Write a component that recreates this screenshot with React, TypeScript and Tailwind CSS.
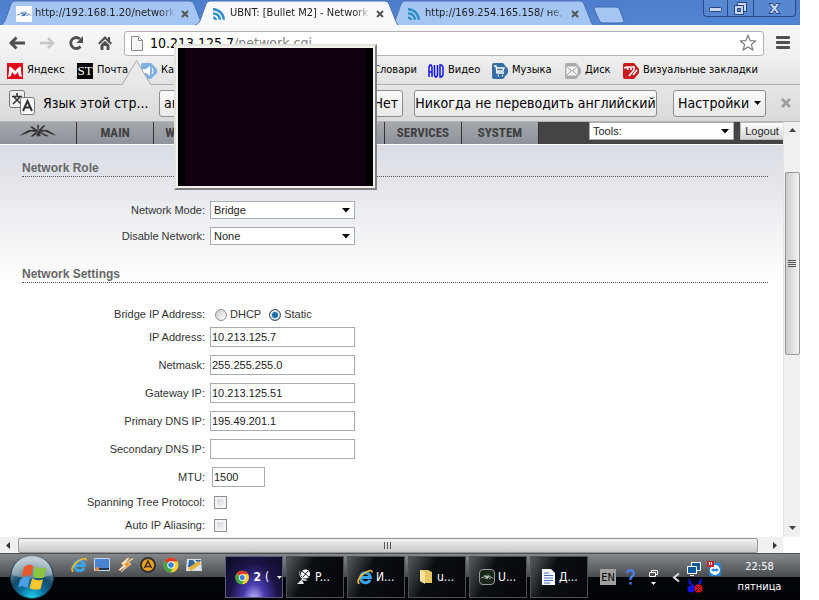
import { type ReactNode } from 'react';

type TabProps = {
  title: string;
  active?: boolean;
  icon: ReactNode;
};

type TaskProps = {
  label: string;
  icon: ReactNode;
};

const fields = [
  { id: 'ip', label: 'IP Address:', value: '10.213.125.7' },
  { id: 'netmask', label: 'Netmask:', value: '255.255.255.0' },
  { id: 'gateway', label: 'Gateway IP:', value: '10.213.125.51' },
  { id: 'dns1', label: 'Primary DNS IP:', value: '195.49.201.1' },
  { id: 'dns2', label: 'Secondary DNS IP:', value: '' },
];

const menu = ['MAIN', 'WIRELESS', 'NETWORK', 'ADVANCED', 'SERVICES', 'SYSTEM'];

function RssIcon() {
  return (
    <svg width="14" height="14" viewBox="0 0 14 14" fill="none" stroke="#2b8fc4" strokeWidth="2.4" aria-hidden="true">
      <path d="M1 2.2c6 .2 10.600 4.600 10.800 10.600" />
      <path d="M1 6.400c4 .2 6.600 2.800 6.800 6.400" />
      <path d="M1 10.600c1.600.1 2.700 1 2.800 2.400" />
    </svg>
  );
}

function UbntMark({ color }: { color: string }) {
  return (
    <svg className="h-full w-full" viewBox="0 0 40 14" fill={color} aria-hidden="true">
      <path d="M0 11.500 4 9l6-3.500 9-.5 1 2.500-8-.5-5 2.500zM40 11.500 36 9l-6-3.500-9-.5-1 2.500 8-.5 5 2.500z" />
      <path d="m11 2 3-.5 5 4-1.500 1zM28 .5l-2.500 0-4.500 5 1.500 1zM19 0h2l-.5 6h-1zM18.500 7h3l1.500 5h-4.500zM18 7l-6 5.500h3L20 8zM22 7l10 5h-4l-7-4z" />
    </svg>
  );
}

function ChromeIcon({ size }: { size: number }) {
  return (
    <svg width={size} height={size} viewBox="0 0 16 16" aria-hidden="true">
      <circle cx="8" cy="8" r="7.500" fill="#f6cf2f" />
      <path d="M8 8 1.500 4.250A7.500 7.500 0 0 1 14.500 4.250L8 4.500z" fill="#dc3a2b" />
      <path d="M1.500 4.250A7.500 7.500 0 0 0 7.500 15.500L10 11 8 8z" fill="#3fa648" />
      <circle cx="8" cy="8" r="3.700" fill="#fff" />
      <circle cx="8" cy="8" r="2.800" fill="#3d7ddb" />
    </svg>
  );
}

function IeIcon({ size }: { size: number }) {
  return (
    <svg width={size} height={size} viewBox="0 0 16 16" fill="none" aria-hidden="true">
      <path d="M13 11A5 5 0 1 1 13.500 8.500H4" stroke="#39a5ee" strokeWidth="3" />
      <path d="M2.500 14.500C-.5 14 1.500 8.500 6 5S15.500.3 15 3.500" stroke="#f3b92c" strokeWidth="1.700" />
    </svg>
  );
}

function Tab({ title, active, icon }: TabProps) {
  return (
    <div className={active ? 'relative z-10 -ml-2 h-[25px] w-[203px]' : 'relative -ml-2 h-[25px] w-[203px] first:ml-0'}>
      <svg className="absolute inset-0 h-full w-full" viewBox="0 0 203 25" preserveAspectRatio="none" aria-hidden="true">
        <path
          d="M0 25C4 24 5 21 6 18L11 4Q12 1 15 1H190Q193 1 194 4L200 19C201 22 202 24 203 25"
          fill={active ? '#f8f9fb' : '#a5c6f3'}
          stroke="#4a6fae"
        />
      </svg>
      <div className="relative flex h-full items-center pl-4 pt-0.5">
        <span className="flex w-4 justify-center">{icon}</span>
        <span className="ml-[3px] w-[141px] whitespace-nowrap text-[11px] text-[#222] [mask-image:linear-gradient(to_right,black_88%,transparent)]">
          {title}
        </span>
        <button aria-label="Закрыть вкладку" className="ml-[5px]">
          <svg width="8" height="8" viewBox="0 0 8 8" stroke="#555" strokeWidth="2">
            <path d="m1 1 6 6M7 1 1 7" />
          </svg>
        </button>
      </div>
    </div>
  );
}

function TitleBar() {
  return (
    <div className="flex h-[25px] items-start justify-between overflow-hidden bg-gradient-to-b from-[#4d7dcd] to-[#5285d4]">
      <div className="flex">
        <Tab
          title="http://192.168.1.20/network"
          icon={<span className="flex h-4 w-4 items-center bg-white"><UbntMark color="#3a6db5" /></span>}
        />
        <Tab title="UBNT: [Bullet M2] - Network" active icon={<RssIcon />} />
        <Tab title="http://169.254.165.158/ не," icon={<RssIcon />} />
        <button aria-label="Новая вкладка" className="pt-1">
          <svg width="32" height="18" viewBox="0 0 32 18">
            <path d="M3 1h21q2 0 3 3l4 11q0 2-2 2H9q-2 0-3-3L1 3q0-2 2-2z" fill="#a5c6f3" stroke="#3d66ab" />
          </svg>
        </button>
      </div>
      <div className="mr-1 flex h-[17px] divide-x divide-[#294b8a] rounded-b border border-t-0 border-[#294b8a] bg-[#5887d2]">
        <button aria-label="Свернуть" className="flex w-6 items-center justify-center pt-1">
          <svg width="13" height="6" viewBox="0 0 13 6"><rect x=".5" y=".5" width="12" height="4" rx="1" fill="#c8d6ee" stroke="#26447d" /></svg>
        </button>
        <button aria-label="Восстановить" className="flex w-[26px] items-center justify-center">
          <svg width="13" height="13" viewBox="0 0 13 13" fill="#c8d6ee" stroke="#26447d">
            <path d="M3.500.5h9v9h-9z" />
            <path d="M.5 3.500h9v9h-9z" />
            <path d="M3.500 6.500h3v3h-3z" fill="#5887d2" />
          </svg>
        </button>
        <button aria-label="Закрыть" className="flex w-[41px] items-center justify-center">
          <svg width="13" height="11" viewBox="0 0 13 11">
            <path d="M1 .5h3.500l2 2.500 2-2.500H12L8.500 5.500l3.500 5H8.500l-2-3-2 3H1l3.500-5z" fill="#c8d6ee" stroke="#26447d" />
          </svg>
        </button>
      </div>
    </div>
  );
}

function Toolbar() {
  return (
    <div className="flex h-8 items-center bg-gradient-to-b from-[#f8f9fb] to-[#efefef] pl-2 pr-2.5 pt-1">
      <button aria-label="Назад" className="mr-3.5">
        <svg width="18" height="14" viewBox="0 0 18 14" fill="none" stroke="#505050" strokeWidth="3"><path d="M17 7H3M8.500 1.500 3 7l5.500 5.500" /></svg>
      </button>
      <button aria-label="Вперёд" className="mr-3">
        <svg width="16" height="14" viewBox="0 0 16 14" fill="none" stroke="#c6c6c6" strokeWidth="2.500"><path d="M0 7h13M8 2l5 5-5 5" /></svg>
      </button>
      <button aria-label="Обновить" className="mr-3.5">
        <svg width="16" height="16" viewBox="0 0 16 16" fill="none">
          <path d="M12.500 11.500A5.500 5.500 0 1 1 12 4" stroke="#505050" strokeWidth="2.800" />
          <path d="M15 1v7H8.500z" fill="#505050" />
        </svg>
      </button>
      <button aria-label="Домой" className="mr-3">
        <svg width="14" height="16" viewBox="0 0 14 16" fill="#505050"><path d="M7 1 0 8l1.500 1.500L7 4.200l5.500 5.300L14 8l-2-2V2h-2v2zM2.500 10 7 5.800l4.500 4.200v5H8.500v-4h-3v4h-3z" /></svg>
      </button>
      <div className="flex h-[25px] flex-1 items-center rounded-[3px] border border-[#b2b2b2] bg-white pl-1.5 pr-1">
        <svg width="12" height="15" viewBox="0 0 12 15" fill="#f5f5f5" stroke="#8b8b8b"><path d="M.5.500h7l4 4v10H.5zM7.500.500v4h4" /></svg>
        <div className="ml-[7px] flex-1 whitespace-nowrap text-[14px] text-black">
          10.213.125.7<span className="text-[#808080]">/network.cgi</span>
        </div>
        <button aria-label="Добавить в закладки" className="mr-0.5">
          <svg width="18" height="18" viewBox="0 0 20 20" fill="#fff" stroke="#777" strokeWidth="1.300"><path d="m10 1.500 2.400 5.800 6.100.4-4.700 4 1.500 6.100L10 14.400l-5.300 3.400 1.500-6.100-4.700-4 6.100-.4z" /></svg>
        </button>
      </div>
      <button aria-label="Меню" className="ml-3">
        <svg width="14" height="14" viewBox="0 0 14 14" fill="#505050"><rect y="0" width="14" height="3" rx="1" /><rect y="5" width="14" height="3" rx="1" /><rect y="10" width="14" height="3" rx="1" /></svg>
      </button>
    </div>
  );
}

function Bookmark({ label, icon }: TaskProps) {
  return (
    <a href="#" className="flex items-center gap-1 whitespace-nowrap text-black">
      {icon}
      {label}
    </a>
  );
}

function Bookmarks() {
  return (
    <div className="relative flex h-[28px] items-center border-b border-[#b0b0b0] bg-gradient-to-b from-[#efefef] to-[#e2e2e2] pl-[7px] text-[11px]">
      <div className="w-[70px]">
        <Bookmark
          label="Яндекс"
          icon={<svg width="16" height="16" viewBox="0 0 16 16"><path d="M0 0h16v16H0z" fill="#e3061a" /><path d="M1 14c1-3 1-7 1-10h2l4 4 4-4h2c0 3 0 7 1 10l-3-1-1-4-3 3-3-3-1 4z" fill="#fff" /></svg>}
        />
      </div>
      <div className="w-16">
        <Bookmark
          label="Почта"
          icon={<span className="flex h-4 w-4 items-center justify-center overflow-hidden bg-black font-['Liberation_Serif',serif] text-[13px] leading-none text-white">ST</span>}
        />
      </div>
      <div className="w-[213px]">
        <Bookmark
          label="Карты"
          icon={
            <svg width="16" height="16" viewBox="0 0 16 16"><path d="M2 0h8l6 6v4l-6 6H2q-2 0-2-2V2q0-2 2-2z" fill="#7fb0df" /><path d="M2 6h3l4-3v10l-4-3H2z" fill="#fff" /><path d="M11 5q2 3 0 6" fill="none" stroke="#fff" /></svg>
          }
        />
      </div>
      <div className="w-[74px] pl-[19px]">
        <Bookmark label="Словари" icon={null} />
      </div>
      <div className="w-16">
        <Bookmark
          label="Видео"
          icon={
            <svg width="16" height="14" viewBox="0 0 16 14" fill="none" stroke="#1212f0" strokeWidth="1.500"><path d="M1 13V3l1-2h1l1 2v10M1 8h3M6.500 1v10l1 2h1l1-2V1M12 1v12h1.500l1.500-2V3l-1.500-2z" /></svg>
          }
        />
      </div>
      <div className="w-[73px]">
        <Bookmark
          label="Музыка"
          icon={
            <svg width="16" height="16" viewBox="0 0 16 16"><path d="M2 0h9l5 6v4l-5 6H2q-2 0-2-2V2q0-2 2-2z" fill="#356fa6" /><path d="M2 3h2l1 7h7M4.500 5H12l-1 3H5M6 12.500h1M10 12.500h1" fill="none" stroke="#fff" strokeWidth="1.300" /></svg>
          }
        />
      </div>
      <div className="w-[58px]">
        <Bookmark
          label="Диск"
          icon={
            <svg width="16" height="16" viewBox="0 0 16 16"><path d="M2 0h9l5 6v4l-5 6H2q-2 0-2-2V2q0-2 2-2z" fill="#a9a9a9" /><path d="M2 4h10v8H2z" fill="#eee" stroke="#fff" /><path d="m2 4 5 4 5-4M2 12l4-4M12 12 8 8" fill="none" stroke="#a0a0a0" /></svg>
          }
        />
      </div>
      <Bookmark
        label="Визуальные закладки"
        icon={
          <svg width="16" height="16" viewBox="0 0 16 16"><path d="M2 0h9l5 6v4l-5 6H2q-2 0-2-2V2q0-2 2-2z" fill="#c9191d" /><path d="M1 5l3-1 1 3M5 4h3v3M9 4h2v3l-5 6M10 12l4-5" fill="none" stroke="#fff" strokeWidth="1.600" /></svg>
        }
      />
      {/* Pointer of the translate bar */}
      <svg className="absolute left-[122px] top-[3px]" width="30" height="25" viewBox="0 0 30 25" aria-hidden="true">
        <path d="M0 25 14.500.500 29 25" fill="#e9e9e9" stroke="#aaa" />
      </svg>
    </div>
  );
}

function TranslateBar() {
  const button = 'flex h-[27px] items-center whitespace-nowrap rounded-[3px] border border-[#8c8c8c] bg-gradient-to-b from-[#fbfbfb] to-[#e9e9e9] px-1';
  return (
    <div className="flex h-[37px] items-center border-b border-[#b5b5b5] bg-gradient-to-b from-[#e6e6e6] to-[#dadada] pl-[9px] pr-2 text-[14px] text-black">
      <svg width="26" height="26" viewBox="0 0 26 26" aria-hidden="true">
        <rect x=".5" y=".5" width="15" height="17" rx="2" fill="#eee" stroke="#777" />
        <path d="M8 3v3M3 6.500h10M5 7l7 7M11 7l-7 7" fill="none" stroke="#333" strokeWidth="1.500" />
        <rect x="11.500" y="7.500" width="14" height="17" rx="2" fill="#fafafa" stroke="#777" />
        <path d="m14 21 4.500-10L23 21M15.500 17.500h6" fill="none" stroke="#333" strokeWidth="2" />
      </svg>
      <span className="ml-2 w-[116px] whitespace-nowrap">Язык этой стр...</span>
      <button className={`${button} w-[120px]`}>английский</button>
      <button className={`${button} ml-2 w-[70px]`}>Да</button>
      <button className={`${button} ml-2 w-[38px] justify-end`}>Нет</button>
      <button className={`${button} ml-[11px] w-[243px] justify-center`}>Никогда не переводить английский</button>
      <button className={`${button} ml-4 w-[93px] justify-between`}>
        Настройки
        <svg width="7" height="4" viewBox="0 0 7 4"><path d="M0 0h7L3.500 4z" /></svg>
      </button>
      <button aria-label="Закрыть панель" className="ml-auto">
        <svg width="12" height="12" viewBox="0 0 12 12" stroke="#9c9c9c" strokeWidth="2.500"><path d="m2 2 8 8M10 2l-8 8" /></svg>
      </button>
    </div>
  );
}

function SelectBox({ id, value }: { id: string; value: string }) {
  return (
    <div className="relative h-[18px] w-[145px]">
      <select id={id} aria-label={value} className="block h-full w-full appearance-none border border-[#a5acb2] bg-white pl-[3px] text-[11px] leading-none text-[#222]">
        <option>{value}</option>
      </select>
      <svg className="pointer-events-none absolute right-[5px] top-[7px]" width="8" height="5" viewBox="0 0 8 5" aria-hidden="true"><path d="M0 0h8L4 4.500z" /></svg>
    </div>
  );
}

function MainMenu() {
  return (
    <nav className="flex h-[23px] justify-between overflow-hidden border-b border-white bg-[#444]">
      <div className="flex">
        <a href="#" aria-label="Ubiquiti" className="flex w-[77px] items-center justify-center border-r border-[#333] bg-gradient-to-b from-[#a6a8ac] to-[#8d929b]">
          <span className="-mt-1 h-[13px] w-[38px]"><UbntMark color="#333" /></span>
        </a>
        {menu.map((item) => (
          <a key={item} href="#" className="flex w-[77px] items-center justify-center border-r border-[#333] bg-gradient-to-b from-[#a6a8ac] to-[#8d929b] font-['Liberation_Sans_Narrow','Roboto_Condensed','DejaVu_Sans_Condensed',sans-serif] text-[13px] font-bold text-[#3f3f3f]">
            {item}
          </a>
        ))}
      </div>
      <div className="flex">
        <SelectBox id="tools" value="Tools:" />
        <button className="ml-[6px] h-[18px] w-[43px] border border-r-0 border-[#bbb] bg-gradient-to-b from-white to-[#d6d6d6] text-[11px] leading-none text-[#222]">Logout</button>
      </div>
    </nav>
  );
}

function Row({ id, label, className, children }: { id: string; label: string; className: string; children: ReactNode }) {
  return (
    <div className={`flex items-center ${className}`}>
      <label htmlFor={id} className="mr-[5px] w-[205px] text-right">{label}</label>
      {children}
    </div>
  );
}

function Heading({ children }: { children: ReactNode }) {
  return (
    <h2 className="ml-[22px] mr-[15px] h-5 border-b border-dotted border-[#555] text-[12px] font-bold leading-[22px] text-[#666]">{children}</h2>
  );
}

const input = 'h-5 border border-[#a5acb2] bg-white pl-px text-[11px] text-[#222]';
const radio = 'mt-0.5 h-3 w-3 appearance-none rounded-full border border-[#8a8f94] bg-gradient-to-br from-[#ccc] to-white checked:border-[#555f66] checked:bg-none checked:bg-[#1b6ea8] checked:shadow-[inset_0_0_0_2px_#dfe6ea]';
const checkbox = 'ml-1 h-[13px] w-[13px] appearance-none border border-[#8e8f8f] bg-gradient-to-br from-[#c8ccd2] to-white shadow-[inset_0_0_0_2px_#f4f4f4]';

function NetworkForm() {
  return (
    <form className="flex-1 bg-[linear-gradient(to_bottom,#d9dce3_0,#ffffff_135px)] pt-3">
      <Heading>Network Role</Heading>
      <div className="mt-5">
        <Row id="mode" label="Network Mode:" className="h-[26px]"><SelectBox id="mode" value="Bridge" /></Row>
        <Row id="disable" label="Disable Network:" className="h-[26px]"><SelectBox id="disable" value="None" /></Row>
      </div>
      <div className="mt-[14px]"><Heading>Network Settings</Heading></div>
      <div className="mt-[22px]">
        <Row id="dhcp" label="Bridge IP Address:" className="h-[18px]">
          <input type="radio" id="dhcp" name="bridge" className={`${radio} ml-[5px]`} />
          <label htmlFor="dhcp" className="ml-[3px]">DHCP</label>
          <input type="radio" id="static" name="bridge" defaultChecked className={`${radio} ml-2`} />
          <label htmlFor="static" className="ml-[3px]">Static</label>
        </Row>
        {fields.map((field) => (
          <Row key={field.id} id={field.id} label={field.label} className="h-7">
            <input id={field.id} defaultValue={field.value} className={`${input} w-[145px]`} />
          </Row>
        ))}
        <Row id="mtu" label="MTU:" className="h-7"><input id="mtu" defaultValue="1500" className={`${input} ml-0.5 w-[53px]`} /></Row>
        <Row id="stp" label="Spanning Tree Protocol:" className="h-[23px]"><input type="checkbox" id="stp" className={checkbox} /></Row>
        <Row id="alias" label="Auto IP Aliasing:" className="h-[23px]"><input type="checkbox" id="alias" className={checkbox} /></Row>
      </div>
    </form>
  );
}

function VerticalScrollbar() {
  return (
    <div className="flex w-[17px] flex-col items-center border-l border-[#e4e4e4] bg-[#f0f0f0]">
      <svg className="mt-1.5" width="7" height="4" viewBox="0 0 7 4"><path d="M0 4h7L3.500 0z" fill="#444" /></svg>
      <div className="mt-10 flex h-[183px] w-[15px] items-center justify-center rounded-[2px] border border-[#979797] bg-gradient-to-r from-[#cbcbce] to-[#f5f5f5]">
        <svg width="8" height="8" viewBox="0 0 8 8" stroke="#555"><path d="M0 .5h8M0 2.500h8M0 4.500h8M0 6.500h8" /></svg>
      </div>
      <svg className="mb-[7px] mt-auto" width="7" height="4" viewBox="0 0 7 4"><path d="M0 0h7L3.500 4z" fill="#444" /></svg>
    </div>
  );
}

function HorizontalScrollbar() {
  return (
    <div className="mr-[17px] flex h-4 items-center bg-[#f0f0f0]">
      <svg className="ml-1.5" width="4" height="7" viewBox="0 0 4 7"><path d="M4 0v7L0 3.500z" fill="#333" /></svg>
      <div className="ml-2 mr-[15px] flex h-[15px] flex-1 items-center justify-center rounded-[2px] border border-[#979797] bg-gradient-to-b from-[#f2f2f2] to-[#c9c9cc]">
        <svg width="9" height="7" viewBox="0 0 9 7" stroke="#555"><path d="M.5 0v7M3.500 0v7M6.500 0v7" /></svg>
      </div>
      <svg className="mr-[6px]" width="4" height="7" viewBox="0 0 4 7"><path d="M0 0v7l4-3.500z" fill="#333" /></svg>
    </div>
  );
}

function Task({ label, icon }: TaskProps) {
  return (
    <button className="flex h-[42px] w-[58px] items-center border border-[#4c4f54] bg-[linear-gradient(115deg,#55585d_0,#0a0d12_38%,#05070b_100%)] pl-[9px] text-[12px] text-white">
      <span className="flex w-4 justify-center">{icon}</span>
      <span className="ml-[3px] whitespace-nowrap">{label}</span>
    </button>
  );
}

function Taskbar() {
  return (
    <footer className="flex h-[47px] items-center border-t border-[#4b4f52] bg-[linear-gradient(to_bottom,#85898c_0,#4a4d50_49%,#03070c_51%,#010204_100%)]">
      <button aria-label="Пуск" className="ml-[10px]">
        <svg width="44" height="44" viewBox="0 0 44 44">
          <defs>
            <radialGradient id="orb" cx=".5" cy="1" r=".9">
              <stop offset="0" stopColor="#1fdcf8" />
              <stop offset=".35" stopColor="#0c6e9e" />
              <stop offset=".6" stopColor="#134a6b" />
              <stop offset="1" stopColor="#9db0bc" />
            </radialGradient>
          </defs>
          <circle cx="22" cy="22" r="21.500" fill="url(#orb)" stroke="#233a4a" />
          <path d="M2 20A20 20 0 0 1 42 20Q22 27 2 20z" fill="#fff" opacity=".35" />
          <path d="M14 12q5-4 9.500-1L21 21q-5-2-9.500 1z" fill="#e8582a" />
          <path d="M25 11.500q5 3 11.500 1L34 22.500q-6 2-11-1z" fill="#8cc63e" />
          <path d="M10.500 24q5-3 9.500-1l-2.500 10q-5-3-9.500-.5z" fill="#4b9fe3" />
          <path d="M22 23.500q5 3 11 1L30.500 34q-6 2-11-1z" fill="#fbc52c" />
        </svg>
      </button>
      <div className="-mt-6 ml-[17px] flex items-center gap-[7px]">
        <IeIcon size={16} />
        <svg width="16" height="14" viewBox="0 0 16 14"><path d="M.5.500h15v12H.5z" fill="#4a83cf" stroke="#c7d6e8" /><path d="M1 10h14v2H1z" fill="#26384d" /><circle cx="3" cy="11" r="2" fill="#e98a31" /></svg>
        <svg width="16" height="16" viewBox="0 0 16 16"><path d="M11 0 3 7l3 1-5 5 2 1 8-6-3-1 5-6z" fill="#f1e5cf" stroke="#6b4a1e" strokeWidth=".6" /><path d="m14 2-8 6 3 1-5 6 10-8-3-1 5-4z" fill="#f7931f" stroke="#fff1d8" strokeWidth=".6" /></svg>
        <svg width="16" height="16" viewBox="0 0 16 16"><circle cx="8" cy="8" r="7" fill="#f2a51d" stroke="#333" strokeWidth="2" /><path d="m4.500 11 3.500-7 3.500 7M6 9.500h4" fill="none" stroke="#3d2a08" strokeWidth="1.600" /></svg>
        <ChromeIcon size={16} />
        <svg width="16" height="14" viewBox="0 0 16 14"><path d="M1 1h14l1 12H0z" fill="#d9e2ea" /><path d="M3 2h4l3 4-4 4-4-1zM9 2l4 4 2-4z" fill="#36679b" /><path d="m2 10 3-2 8-5 2 3-7 5-3 2z" fill="#e8b33d" /></svg>
      </div>
      <div className="ml-[23px] flex gap-[3px]">
        <button className="flex h-[42px] w-[58px] items-center border border-[#5d5a80] bg-[radial-gradient(ellipse_at_50%_110%,#c8c4ff_0,#4a3bb0_28%,#1a1446_60%,#0e0c22_100%)] pl-[9px] text-[12px] font-bold text-white">
          <ChromeIcon size={15} />
          <span className="ml-1">2</span>
          <span className="ml-1 font-normal">(</span>
          <svg className="ml-2" width="5" height="3" viewBox="0 0 5 3" fill="#fff"><path d="M0 0h5L2.500 3z" /></svg>
        </button>
        <Task
          label="P..."
          icon={<svg width="16" height="16" viewBox="0 0 16 16" fill="#e6e6e6"><path d="M4 1q-1 9 8 10l-3 1-3-1 2 4H1l3-3 2-2Q2 6 4 1z" /><circle cx="9.500" cy="5" r="4.500" fill="#fff" /><path d="M6 2l7 6M12 2 7 8" stroke="#222" /></svg>}
        />
        <Task label="И..." icon={<IeIcon size={16} />} />
        <Task
          label="u..."
          icon={<svg width="14" height="16" viewBox="0 0 14 16"><path d="M1 1h8l4 2v11H5l-4-2z" fill="#e6c565" /><path d="M1 1l5 2v12l-5-3z" fill="#f8e29a" /></svg>}
        />
        <Task
          label="U..."
          icon={<span className="flex h-4 w-4 items-center rounded-sm border border-[#999] bg-[#18271a]"><UbntMark color="#ddd" /></span>}
        />
        <Task
          label="Д..."
          icon={<svg width="13" height="16" viewBox="0 0 13 16"><path d="M0 0h9l4 4v12H0z" fill="#f4f7fb" /><path d="M2 4h5M2 6.500h9M2 9h9M2 11.500h9M2 14h6" stroke="#4a72b5" /></svg>}
        />
      </div>
      <div className="ml-auto flex items-center text-white">
        <span className="flex h-4 w-4 items-center justify-center bg-[#a0a0a0] text-[11px] leading-none text-black">EN</span>
        <button aria-label="Справка" className="ml-2.5">
          <svg width="9" height="16" viewBox="0 0 9 16" fill="none" stroke="#4d7ff0" strokeWidth="2.200"><path d="M1.200 4.500Q1.200 1.200 4.500 1.200T7.800 4.500Q7.800 6.500 6 7.500T4.500 11M4.500 13v2.500" /></svg>
        </button>
        <svg className="ml-3.5" width="9" height="15" viewBox="0 0 9 15" fill="none" stroke="#fff"><path d="M2.500 2.500v-2h6v4h-2M.5 2.500h6v4h-6z" /><path d="M2 12h5l-2.500 3z" fill="#fff" stroke="none" /></svg>
        <svg className="ml-3.5" width="8" height="9" viewBox="0 0 8 9" fill="none" stroke="#ddd" strokeWidth="2"><path d="M7 .5 2 4.500l5 4" /></svg>
        <div className="ml-[7px] grid grid-cols-2 gap-x-1 gap-y-0.5">
          <svg width="15" height="16" viewBox="0 0 15 16" stroke="#fff" fill="#0d5b9c"><path d="M4.500 1.500h9v8h-9z" /><path d="M.5 5.500h9v7h-9zM3 14.500h4" /></svg>
          <svg width="15" height="16" viewBox="0 0 15 16"><rect x="2" y="2" width="12" height="13" rx="2" fill="#2386dc" /><circle cx="8" cy="9" r="5" fill="#fff" /><path d="m4 9 3-2v1h2V7l3 2-3 2v-1H7v1z" fill="#2386dc" /><path d="M0 0h7v6H0z" fill="#cf1f28" /><path d="M2.500 1v3M4.500 1v3" stroke="#fff" /></svg>
          <svg width="16" height="14" viewBox="0 0 16 14" fill="none"><path d="m2 0 2 5 4 3M14 0l-2 5-4 3M1 3l3 2M15 3l-3 2" stroke="#1414e8" strokeWidth="1.500" /><circle cx="4" cy="10" r="3.500" fill="#1414e8" /><circle cx="11.500" cy="9.500" r="4" fill="#ee1010" /><path d="m9 7 5 5M14 7l-5 5" stroke="#300" /></svg>
        </div>
        <div className="ml-3 mr-4 flex w-[49px] flex-col items-center gap-1 text-[11px] leading-4">
          <span>22:58</span>
          <span>пятница</span>
        </div>
      </div>
    </footer>
  );
}

export default function App() {
  return (
    <div className="relative mr-[19px] flex min-h-screen flex-col bg-white font-['DejaVu_Sans_Condensed','DejaVu_Sans',sans-serif]">
      <TitleBar />
      <Toolbar />
      <Bookmarks />
      <TranslateBar />
      <main className="flex flex-1 font-['Liberation_Sans',Arial,sans-serif] text-[11px] text-[#333]">
        <div className="flex min-w-0 flex-1 flex-col">
          <MainMenu />
          <NetworkForm />
        </div>
        <VerticalScrollbar />
      </main>
      <HorizontalScrollbar />
      <Taskbar />
      {/* Floating video window */}
      <div className="absolute left-[174px] top-[44px] z-20 h-[146px] w-[203px] border-2 border-b-[#808080] border-l-[#e4e2dc] border-r-[#808080] border-t-[#e4e2dc] bg-[#f4f2ee] p-0.5">
        <div className="h-full border-x-[7px] border-black bg-[#110010]" />
      </div>
    </div>
  );
}
